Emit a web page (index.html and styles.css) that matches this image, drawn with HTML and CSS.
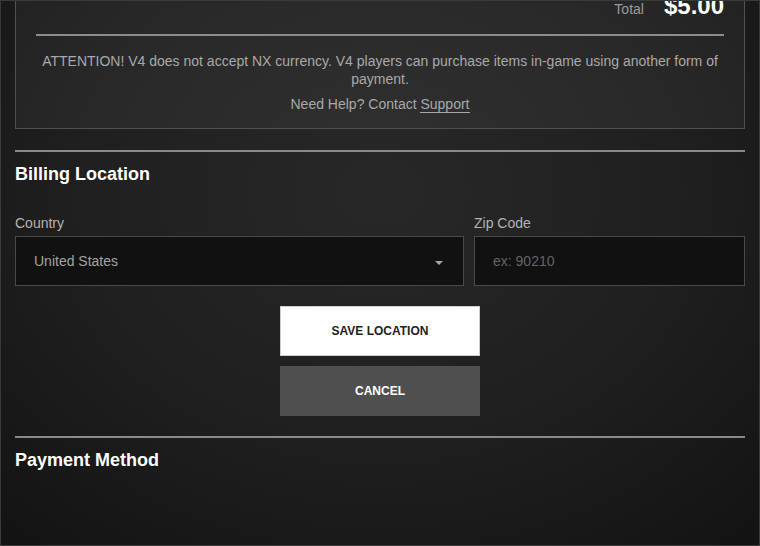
FILE: index.html
```html
<!DOCTYPE html>
<html lang="en">
<head>
<meta charset="utf-8">
<title>Billing</title>
<link rel="stylesheet" href="styles.css">
</head>
<body>
<div class="frame">
  <div class="content">
    <section class="summary">
      <div class="total-row">
        <span class="total-label">Total</span>
        <span class="total-value">$5.00</span>
      </div>
      <hr class="summary-rule">
      <p class="notice">ATTENTION! V4 does not accept NX currency. V4 players can purchase items in-game using another form of payment.</p>
      <p class="help">Need Help? Contact <a class="support" href="#">Support</a></p>
    </section>

    <hr class="divider">
    <h2 class="section-title">Billing Location</h2>

    <div class="fields">
      <div class="field">
        <label class="field-label">Country</label>
        <div class="select">
          <span class="select-value">United States</span>
          <span class="caret"></span>
        </div>
      </div>
      <div class="field">
        <label class="field-label">Zip Code</label>
        <div class="input"><span class="placeholder">ex: 90210</span></div>
      </div>
    </div>

    <div class="actions">
      <button class="btn btn-save">SAVE LOCATION</button>
      <button class="btn btn-cancel">CANCEL</button>
    </div>

    <hr class="divider">
    <h2 class="section-title">Payment Method</h2>
  </div>
</div>
</body>
</html>
```

FILE: styles.css
```css
html, body {
  margin: 0;
  padding: 0;
  background: #141414;
}
body {
  font-family: "Liberation Sans", Arial, sans-serif;
}
.frame {
  width: 760px;
  height: 546px;
  box-sizing: border-box;
  border: 1px solid #3a3a3a;
  overflow: hidden;
  background: radial-gradient(ellipse 75% 85% at 50% 35%, #282828 0%, #1f1f1f 55%, #131313 100%);
}
.content {
  padding: 0 14px;
}
.summary {
  margin-top: -20px;
  border: 1px solid #505050;
  background: rgba(255, 255, 255, 0.045);
  padding: 10px 20px 15px;
}
.total-row {
  display: flex;
  justify-content: flex-end;
  align-items: baseline;
  gap: 20px;
  line-height: 28px;
}
.total-label {
  font-size: 14px;
  color: #9a9a9a;
}
.total-value {
  font-size: 24px;
  font-weight: bold;
  color: #fff;
}
.summary-rule {
  margin: 11px 0 0;
  border: 0;
  height: 2px;
  background: #8c8c8c;
}
.notice {
  margin: 16px 0 0;
  font-size: 14px;
  line-height: 18px;
  color: #a9a9a9;
  text-align: center;
}
.help {
  margin: 7px 0 0;
  font-size: 14px;
  line-height: 18px;
  color: #a9a9a9;
  text-align: center;
}
.support {
  color: #a9a9a9;
  text-decoration: none;
  border-bottom: 1px solid #a9a9a9;
}
.divider {
  margin: 21px 0 0;
  border: 0;
  height: 2px;
  background: #8a8a8a;
}
.section-title {
  margin: 11px 0 0;
  font-size: 18px;
  line-height: 22px;
  font-weight: bold;
  color: #fff;
}
.fields {
  display: grid;
  grid-template-columns: 449fr 271fr;
  gap: 10px;
  margin-top: 29px;
}
.field {
  display: flex;
  flex-direction: column;
}
.field-label {
  font-size: 14px;
  line-height: 18px;
  color: #b4b4b4;
  margin-bottom: 4px;
}
.select, .input {
  height: 50px;
  box-sizing: border-box;
  border: 1px solid #4a4a4a;
  background: #111111;
  display: flex;
  align-items: center;
  padding: 0 18px;
  font-size: 14px;
}
.select {
  justify-content: space-between;
  padding-right: 20px;
}
.select-value {
  color: #a3a3a3;
}
.caret {
  width: 0;
  height: 0;
  border-left: 4px solid transparent;
  border-right: 4px solid transparent;
  border-top: 4px solid #a8a8a8;
  margin-top: 3px;
}
.placeholder {
  color: #646464;
}
.actions {
  display: flex;
  flex-direction: column;
  align-items: center;
  gap: 10px;
  margin-top: 20px;
}
.btn {
  width: 200px;
  height: 50px;
  box-sizing: border-box;
  font-family: "Liberation Sans", Arial, sans-serif;
  font-size: 12px;
  font-weight: bold;
  padding: 0;
  cursor: pointer;
}
.btn-save {
  background: #fff;
  color: #222;
  border: 1px solid #cfcfcf;
}
.btn-cancel {
  background: #4f4f4f;
  color: #fff;
  border: 0;
}
.actions + .divider {
  margin-top: 20px;
}
```
